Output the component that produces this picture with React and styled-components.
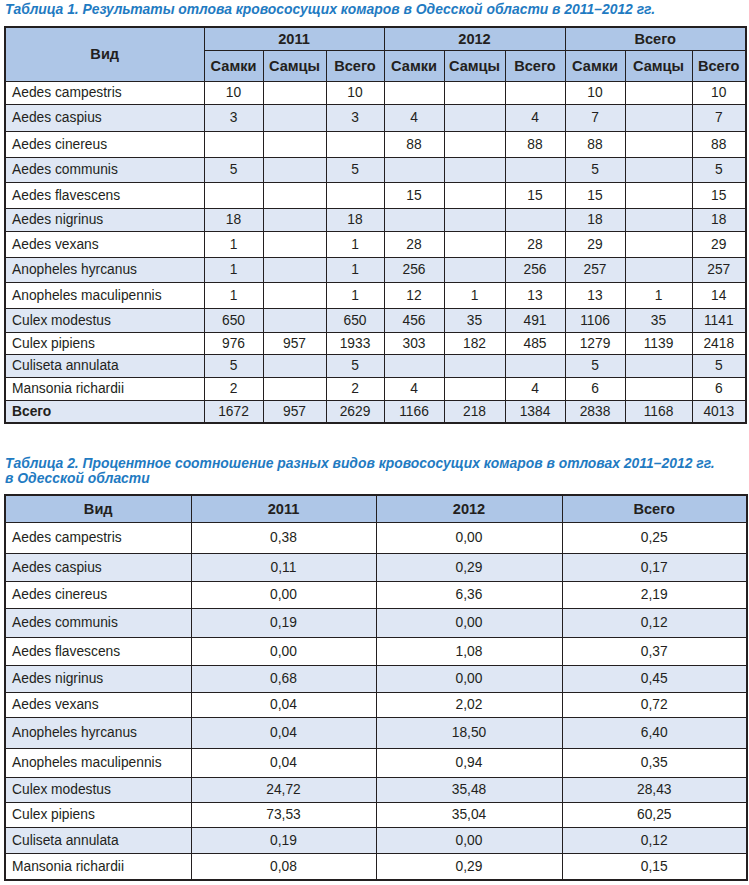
import styled, { createGlobalStyle } from "styled-components"

const GlobalStyle = createGlobalStyle`
    body {
        margin: 0;
        background: #ffffff;
        font-family: "Liberation Sans", Arial, sans-serif;
        color: #231f20;
    }
`

const species = [
    "Aedes campestris",
    "Aedes caspius",
    "Aedes cinereus",
    "Aedes communis",
    "Aedes flavescens",
    "Aedes nigrinus",
    "Aedes vexans",
    "Anopheles hyrcanus",
    "Anopheles maculipennis",
    "Culex modestus",
    "Culex pipiens",
    "Culiseta annulata",
    "Mansonia richardii",
]

const counts = [
    ["10", "", "10", "", "", "", "10", "", "10"],
    ["3", "", "3", "4", "", "4", "7", "", "7"],
    ["", "", "", "88", "", "88", "88", "", "88"],
    ["5", "", "5", "", "", "", "5", "", "5"],
    ["", "", "", "15", "", "15", "15", "", "15"],
    ["18", "", "18", "", "", "", "18", "", "18"],
    ["1", "", "1", "28", "", "28", "29", "", "29"],
    ["1", "", "1", "256", "", "256", "257", "", "257"],
    ["1", "", "1", "12", "1", "13", "13", "1", "14"],
    ["650", "", "650", "456", "35", "491", "1106", "35", "1141"],
    ["976", "957", "1933", "303", "182", "485", "1279", "1139", "2418"],
    ["5", "", "5", "", "", "", "5", "", "5"],
    ["2", "", "2", "4", "", "4", "6", "", "6"],
]

const totals = ["1672", "957", "2629", "1166", "218", "1384", "2838", "1168", "4013"]

const heights1 = [23, 27, 26, 25, 26, 23, 26, 25, 26, 24, 22, 23, 23]

const percents = [
    ["0,38", "0,00", "0,25"],
    ["0,11", "0,29", "0,17"],
    ["0,00", "6,36", "2,19"],
    ["0,19", "0,00", "0,12"],
    ["0,00", "1,08", "0,37"],
    ["0,68", "0,00", "0,45"],
    ["0,04", "2,02", "0,72"],
    ["0,04", "18,50", "6,40"],
    ["0,04", "0,94", "0,35"],
    ["24,72", "35,48", "28,43"],
    ["73,53", "35,04", "60,25"],
    ["0,19", "0,00", "0,12"],
    ["0,08", "0,29", "0,15"],
]

const heights2 = [31, 28, 27, 29, 28, 27, 25, 31, 29, 25, 25, 26, 27]

const widths1 = [199, 59, 63, 58, 60, 61, 60, 60, 67, 54]
const widths2 = [186, 185, 186, 185]

export default function App() {
    return (
        <>
            <GlobalStyle />
            <Page>
                <Caption>
                    Таблица 1. Результаты отлова кровососущих комаров в Одесской области в 2011–2012 гг.
                </Caption>
                <Table>
                    <colgroup>
                        {widths1.map((w, i) => <col key={i} style={{ width: w }} />)}
                    </colgroup>
                    <thead>
                        <Row $h={23}>
                            <Th rowSpan={2}>Вид</Th>
                            <Th colSpan={3}>2011</Th>
                            <Th colSpan={3}>2012</Th>
                            <Th colSpan={3}>Всего</Th>
                        </Row>
                        <Row $h={31}>
                            {["a", "b", "c"].flatMap(g => [
                                <Th key={g + "1"}>Самки</Th>,
                                <Th key={g + "2"}>Самцы</Th>,
                                <Th key={g + "3"}>Всего</Th>,
                            ])}
                        </Row>
                    </thead>
                    <tbody>
                        {species.map((name, i) => (
                            <Row key={name} $h={heights1[i]} $alt={i % 2 === 1}>
                                <NameCell>{name}</NameCell>
                                {counts[i].map((v, j) => <Td key={j}>{v}</Td>)}
                            </Row>
                        ))}
                        <Row $h={23} $alt>
                            <NameCell $bold>Всего</NameCell>
                            {totals.map((v, j) => <Td key={j}>{v}</Td>)}
                        </Row>
                    </tbody>
                </Table>

                <Caption $second>
                    Таблица 2. Процентное соотношение разных видов кровососущих комаров в отловах 2011–2012 гг.
                    <br />в Одесской области
                </Caption>
                <Table>
                    <colgroup>
                        {widths2.map((w, i) => <col key={i} style={{ width: w }} />)}
                    </colgroup>
                    <thead>
                        <Row $h={27}>
                            <Th>Вид</Th>
                            <Th>2011</Th>
                            <Th>2012</Th>
                            <Th>Всего</Th>
                        </Row>
                    </thead>
                    <tbody>
                        {species.map((name, i) => (
                            <Row key={name} $h={heights2[i]} $alt={i % 2 === 1}>
                                <NameCell>{name}</NameCell>
                                {percents[i].map((v, j) => <Td key={j}>{v}</Td>)}
                            </Row>
                        ))}
                    </tbody>
                </Table>
            </Page>
        </>
    )
}

const Page = styled.div`
    width: 741px;
    padding: 2px 4px 0 4px;
`

const Caption = styled.div`
    font-family: "Liberation Sans", Arial, sans-serif;
    font-weight: 700;
    font-style: italic;
    font-size: 13.9px;
    line-height: 15px;
    color: #1f7bc2;
    padding-left: 1px;
    margin-top: ${p => p.$second ? "32px" : "0"};
    margin-bottom: ${p => p.$second ? "8px" : "9px"};
`

const Table = styled.table`
    width: 741px;
    table-layout: fixed;
    border-collapse: collapse;
    border: 2px solid #231f20;
`

const Row = styled.tr`
    height: ${p => p.$h}px;
    background: ${p => p.$alt ? "#dfe7f4" : "#ffffff"};
`

const Th = styled.th`
    background: #aec6e7;
    border: 1px solid #231f20;
    font-size: 14.6px;
    font-weight: 700;
    text-align: center;
    vertical-align: middle;
    padding: 0;
    color: #231f20;
`

const Td = styled.td`
    border: 1px solid #231f20;
    font-size: 13.8px;
    text-align: center;
    vertical-align: middle;
    padding: 0;
`

const NameCell = styled.td`
    border: 1px solid #231f20;
    font-size: 13.8px;
    font-weight: ${p => p.$bold ? 700 : 400};
    text-align: left;
    vertical-align: middle;
    padding: 0 0 0 6px;
`
